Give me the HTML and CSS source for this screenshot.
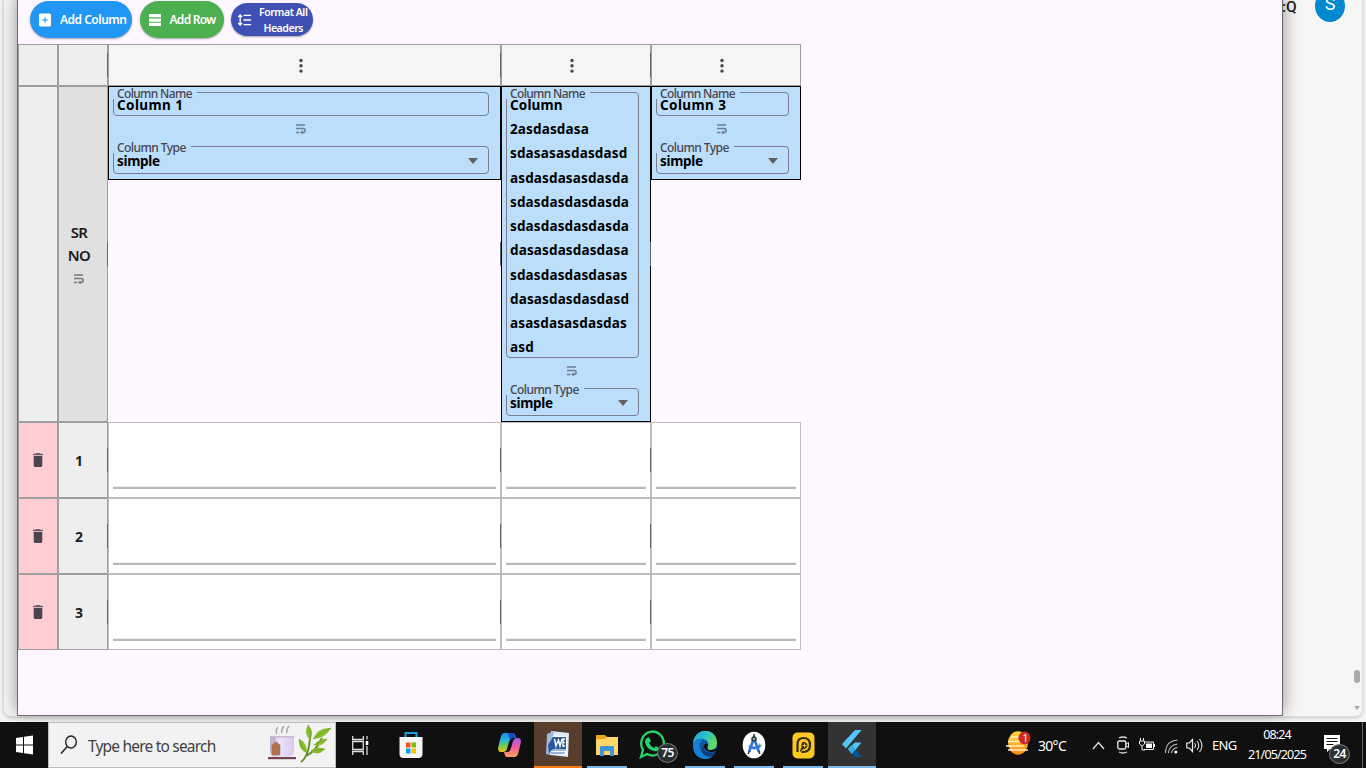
FILE: index.html
```html
<!DOCTYPE html>
<html lang="en">
<head>
<meta charset="utf-8">
<title>Table editor</title>
<link rel="stylesheet" href="styles.css">
</head>
<body>
<svg width="0" height="0" class="defs">
  <symbol id="wrap" viewBox="0 0 10 10"><path d="M0 1h9M0 4.600h7.200a1.900 1.900 0 0 1 0 3.800H5.200M0 8.400h3.400" fill="none" stroke="currentColor" stroke-width="1.500"/><path d="M6.600 6.200v4.200L4.200 8.400z" fill="currentColor"/></symbol>
  <symbol id="dots" viewBox="0 0 4 16"><circle cx="2" cy="2.500" r="1.700"/><circle cx="2" cy="7.800" r="1.700"/><circle cx="2" cy="13.100" r="1.700"/></symbol>
  <symbol id="trash" viewBox="0 0 10 14"><path d="M3 0h4l.6.7H10v1.500H0V.7h2.400z" opacity=".8"/><path d="M.7 3h8.600v9q0 2-1.500 2H2.200Q.7 14 .7 12z"/></symbol>
</svg>
<div class="desktop">
  <div class="backdrop">
    <div class="code">:Q</div>
    <div class="avatar">S</div>
    <div class="thumb"></div>
    <div class="arrow"></div>
  </div>
  <main class="window">
    <div class="toolbar">
      <button class="btn blue"><svg width="12" height="14" viewBox="0 0 12 14"><rect y=".5" width="12" height="13" rx="1.500" fill="#fff"/><path d="M3 7h6M6 4v6" stroke="#2196f3" stroke-width="1"/></svg><span>Add Column</span></button>
      <button class="btn green"><svg width="12" height="12" viewBox="0 0 12 12"><path d="M0 0h12v3.300H0zM0 4.400h12v3.300H0zM0 8.800h12V12H0z" fill="#fff"/></svg><span>Add Row</span></button>
      <button class="btn indigo"><svg width="13" height="12" viewBox="0 0 13 12"><path d="M5.500 1.300H13M5.500 6H13M5.500 10.700H13M2.200 1v10M.3 3l1.900-2L4.100 3M.3 9l1.900 2L4.100 9" fill="none" stroke="#fff" stroke-width="1.300"/></svg><span>Format All<br>Headers</span></button>
    </div>
    <div class="table">
      <div class="cell g1"></div>
      <div class="cell g1 handle"></div>
      <div class="cell top handle"><svg width="4" height="16"><use href="#dots"/></svg></div>
      <div class="cell top handle"><svg width="4" height="16"><use href="#dots"/></svg></div>
      <div class="cell top"><svg width="4" height="16"><use href="#dots"/></svg></div>

      <div class="cell g1"></div>
      <div class="cell g2 handle"><div class="sr">SR<br>NO</div><svg width="10" height="10"><use href="#wrap"/></svg></div>
      <div class="head handle"><div class="card">
        <div class="field name short"><label>Column Name</label><p>Column 1</p></div>
        <svg class="w" width="10" height="10"><use href="#wrap"/></svg>
        <div class="field type"><label>Column Type</label><p>simple</p><i></i></div>
      </div></div>
      <div class="head handle"><div class="card">
        <div class="field name"><label>Column Name</label><p>Column<br>2asdasdasa<br>sdasasasdasdasd<br>asdasdasasdasda<br>sdasdasdasdasda<br>sdasdasdasdasda<br>dasasdasdasdasa<br>sdasdasdasdasas<br>dasasdasdasdasd<br>asasdasasdasdas<br>asd</p></div>
        <svg class="w" width="10" height="10"><use href="#wrap"/></svg>
        <div class="field type"><label>Column Type</label><p>simple</p><i></i></div>
      </div></div>
      <div class="head"><div class="card">
        <div class="field name short"><label>Column Name</label><p>Column 3</p></div>
        <svg class="w" width="10" height="10"><use href="#wrap"/></svg>
        <div class="field type"><label>Column Type</label><p>simple</p><i></i></div>
      </div></div>

      <div class="cell del"><svg width="10" height="14"><use href="#trash"/></svg></div><div class="cell g1 num handle">1</div><div class="data handle"></div><div class="data handle"></div><div class="data"></div>
      <div class="cell del"><svg width="10" height="14"><use href="#trash"/></svg></div><div class="cell g1 num handle">2</div><div class="data handle"></div><div class="data handle"></div><div class="data"></div>
      <div class="cell del"><svg width="10" height="14"><use href="#trash"/></svg></div><div class="cell g1 num handle">3</div><div class="data handle"></div><div class="data handle"></div><div class="data"></div>
    </div>
  </main>
</div>
<footer class="taskbar">
  <div class="slot start"><svg width="17" height="20" viewBox="0 0 17 20"><path d="M0 3l7-1v7.500H0zM8 1.800L17 .5v9H8zM0 10.500h7V18l-7-1zM8 10.500h9v9l-9-1.300z" fill="#fff"/></svg></div>
  <div class="search">
    <svg width="18" height="20" viewBox="0 0 18 20"><ellipse cx="11" cy="7" rx="5.300" ry="6" fill="none" stroke="#222" stroke-width="1.400"/><path d="M7.300 11.500L1 18.600" stroke="#222" stroke-width="1.500"/></svg>
    <span>Type here to search</span>
    <svg class="tea" width="66" height="42" viewBox="0 0 66 42">
      <defs><linearGradient id="cup"><stop stop-color="#b9a9cb"/><stop offset=".4" stop-color="#ece5f8"/><stop offset="1" stop-color="#d5c9ee"/></linearGradient></defs>
      <path d="M9 10q-2-3 1-7M14 9q-1-3 2-7M19 9q-1-3 2-7" fill="none" stroke="#aaa" stroke-width="1.500"/>
      <path d="M2 12h24v13q0 8-6 8H8q-6 0-6-8z" fill="url(#cup)"/>
      <path d="M2 12h24v1.500H2z" fill="#c9b9d2"/>
      <path d="M6 13v6M4 21l4-3 4 3v10H4z" fill="#b5714f" stroke="#9c6049" stroke-width=".5"/>
      <path d="M0 33h28v2.200H0z" fill="#76434f"/>
      <path d="M33 38q8-6 9-25M38 32q10-5 16-18" fill="none" stroke="#5c8f22" stroke-width="1.800"/>
      <path d="M40 1q7 6 2 15-7-7-2-15zM31 15q8 3 8 14-9-3-8-14zM63 4q-13-1-18 11 12 0 18-11zM59 15q-8-1-13 6 8 3 13-6zM57 25q-8-4-14 2 7 6 14-2z" fill="#8dbf2c"/>
      <path d="M40 1q4 7 2 15M31 15q2 8 8 14M63 4q-10 4-18 11M59 15l-13 6M57 25l-14 2" fill="none" stroke="#6ca127" stroke-width="1"/>
    </svg>
  </div>
  <div class="slot"><svg width="17" height="19" viewBox="0 0 17 19"><path d="M.7 0v3.500h10.600V0M.7 19v-3.500h10.600V19M.7 5.500h10.600v8H.7zM15 0v3.500M15 10v9" fill="none" stroke="#ddd" stroke-width="1.300"/><path d="M13.700 5h2.600v4h-2.600z" fill="#fff"/></svg></div>
  <div class="slot store"><svg width="24" height="28" viewBox="0 0 24 28"><path d="M6.500 7V2h11v5" fill="none" stroke="#13a2dc" stroke-width="2"/><path d="M.5 6h23v17q0 4-4 4h-15q-4 0-4-4z" fill="#f5f5f5"/><path d="M7 11.500h4.500v5H7z" fill="#f25022"/><path d="M12.500 11.500H17v5h-4.500z" fill="#7fba00"/><path d="M7 17.500h4.500v5H7z" fill="#00a4ef"/><path d="M12.500 17.500H17v5h-4.500z" fill="#ffb900"/></svg></div>
  <div class="slot copilot"><svg width="23" height="26" viewBox="0 0 23 26">
    <defs><linearGradient id="ca" x2="0" y2="1"><stop stop-color="#198be8"/><stop offset=".4" stop-color="#28b8d8"/><stop offset=".7" stop-color="#7bc944"/><stop offset="1" stop-color="#f5c329"/></linearGradient><linearGradient id="cb" x2="0" y2="1"><stop stop-color="#a259ee"/><stop offset=".5" stop-color="#ef5b9c"/><stop offset="1" stop-color="#ffa35c"/></linearGradient></defs>
    <path d="M6 1h9q2 0 3 5h-3q-3 0-4 4l-2 7q-1 3-4 3H3q-4 0-2.500-6L3 4q1-3 3-3z" fill="url(#ca)"/><path d="M17 25H9q-2 0-3-5h3q3 0 4-4l2-7q1-3 4-3h1q4 0 2.500 6L20 22q-1 3-3 3z" fill="url(#cb)"/><path d="M10 1h5q2 0 3 5h-3q-2 0-3 2z" fill="#1b4ac2"/></svg></div>
  <div class="slot word"><svg width="24" height="27" viewBox="0 0 24 27"><path d="M5 0l18 2-1 24L4 24z" fill="#dfe9f6"/><path d="M7 4l14 1.500V24L7 22z" fill="#fff"/><path d="M15 9h5M15 12h5M15 15h5M5 19h15M5 22h14" stroke="#7da0cf" stroke-width="1.300"/><path d="M1 3L8 0 4 24l-4-1z" fill="#9eb9de"/><path d="M7 6h13v12H12Q5 17 3 23L2 14z" fill="#2b579a"/><path d="M8.500 8l1.500 7 2.500-6 1.500 6 2-7M19 8h-2v7h2M17 11.500h2" fill="none" stroke="#fff" stroke-width="1.400"/></svg></div>
  <div class="slot run"><svg width="22" height="22" viewBox="0 0 22 22"><path d="M0 1h9l2 2h11v18H0z" fill="#e8a61c"/><path d="M0 5h9l2-2h11v18H0z" fill="#ffd768"/><path d="M4 22v-9q0-1 1-1h12q1 0 1 1v9h-4v-5H8v5z" fill="#3d94db"/></svg></div>
  <div class="slot wa"><svg width="26" height="29" viewBox="0 0 26 29"><path d="M2 27l2-7A11.300 12 0 1 1 8 24z" fill="none" stroke="#25d366" stroke-width="2.300"/><path d="M8 8q2-2 3 1l1 2-2 2q2 4 5 5l2-2 3 2q-1 4-5 3-8-2-9-9 0-3 2-4z" fill="#25d366"/></svg><b class="badge">75</b></div>
  <div class="slot run"><svg width="24" height="28" viewBox="0 0 24 28"><defs><linearGradient id="ea" x2="1" y2=".5"><stop stop-color="#249fde"/><stop offset=".55" stop-color="#2fc2c5"/><stop offset="1" stop-color="#65d858"/></linearGradient></defs><ellipse cx="12" cy="14" rx="12" ry="14" fill="#0c59a4"/><path d="M0 13C1-5 24-4 24 12q0 7-8 7-3-1-1-4 1-6-5-7-7-1-10 5z" fill="url(#ea)"/><path d="M0 13q4-6 10-5-5 4-3 10 4 9 14 5-3 5-9 5Q0 27 0 13z" fill="#1581d4"/><path d="M10 14q-1 7 8 8 4 0 5-2-3 8-10 5-7-4-3-11z" fill="#123e75"/><path d="M11 14q3-3 4 0-2 5 2 5 5 0 7-2v2q-7 5-12-1-2-2-1-4z" fill="#111"/></svg></div>
  <div class="slot run"><svg width="24" height="28" viewBox="0 0 24 28"><ellipse cx="12" cy="14" rx="11.300" ry="13.300" fill="#fff"/><path d="M7 21l5-14 5 14M7 15q5 4 11 0" fill="none" stroke="#3878e5" stroke-width="2.800"/><circle cx="12" cy="8" r="2" fill="#8ab" stroke="#333" stroke-width="1.500"/><path d="M12 3v3M7.500 20L6 23M16.500 20l1.500 3" stroke="#333" stroke-width="1.400"/><path d="M17 12l3 3-3 1z" fill="#43b55b"/></svg></div>
  <div class="slot run"><svg width="23" height="27" viewBox="0 0 23 27"><rect x=".5" y=".5" width="22" height="26" rx="5" fill="#fdc921"/><path d="M5.500 20V12q0-6 6-6 6.500 0 6.500 7t-7 7H9.500" fill="none" stroke="#332b18" stroke-width="2.200"/><path d="M8 20q0-3 1.500-4v-4q1-3 3-2 3 1 3 4-1 3-4 3z" fill="#332b18"/><path d="M10.500 13.500h4M12.500 11.500v4" stroke="#fdc921"/></svg></div>
  <div class="slot active"><svg width="20" height="28" viewBox="0 0 20 28"><path d="M13 0h6.500L4 18.500 0 14z" fill="#54c5f8"/><path d="M13 12.500h6.500L10 24 6 19z" fill="#54c5f8"/><path d="M6 19l4-4.300 4 4.800-4 4.500z" fill="#35afe8"/><path d="M10 23.500l3.500-4L19.500 27H13z" fill="#01579b"/></svg></div>
  <div class="tray">
    <svg class="weather" width="25" height="24" viewBox="0 0 25 24"><defs><linearGradient id="sun" x2="0" y2="1"><stop stop-color="#ffd93c"/><stop offset="1" stop-color="#ff8b16"/></linearGradient></defs><ellipse cx="12" cy="12" rx="10" ry="11.700" fill="url(#sun)"/><path d="M5 6h10M2 10.500h15M0 15h18M2 19h20" stroke="#fff0ca" stroke-width="1.500"/><ellipse cx="18.500" cy="7" rx="6" ry="6.500" fill="#cb2a22"/><text x="16.400" y="11" font-size="10" fill="#fff" font-family="Noto Sans">1</text></svg>
    <span class="temp">30°C</span>
    <svg class="chev" width="13" height="9" viewBox="0 0 13 9"><path d="M1 8l5.500-6.500L12 8" fill="none" stroke="#ddd" stroke-width="1.400"/></svg>
    <svg class="cam" width="12" height="18" viewBox="0 0 12 18"><path d="M2 2q4-2 8 0M2 16q4 2 8 0" fill="none" stroke="#ddd" stroke-width="1.300"/><rect x=".8" y="5" width="8" height="8" rx="1.500" fill="none" stroke="#eee" stroke-width="1.300"/><path d="M9 8l2.500-1.500v5L9 10" fill="none" stroke="#eee"/></svg>
    <svg class="bat" width="16" height="14" viewBox="0 0 16 14"><path d="M1.500 0v3M4.500 0v3M.5 3h5v3L3 8 .5 6zM3 8v4h3" fill="none" stroke="#eee"/><path d="M6 4h8.500v7.500H5" fill="none" stroke="#eee"/><path d="M7 5.500h6v4.500H7z" fill="#fff"/><path d="M15.500 6v3" stroke="#fff"/></svg>
    <svg class="wifi" width="13" height="15" viewBox="0 0 13 15"><path d="M.5 14Q.5 2 12.500 1M3.500 14Q4 6 12.500 5M6.500 14q1-5 6-5.500" fill="none" stroke="#bbb" stroke-width="1.200"/><circle cx="10.800" cy="13" r="1.500" fill="#fff"/></svg>
    <svg class="vol" width="18" height="15" viewBox="0 0 18 15"><path d="M.8 5h2.500L6.500 1.500v12L3.300 10H.8z" fill="none" stroke="#eee" stroke-width="1.200"/><path d="M8.500 5q2 2.500 0 5M11 3q3.500 4.500 0 9M13.500 1q5 6.500 0 13" fill="none" stroke="#ddd" stroke-width="1.100"/></svg>
    <span class="lang">ENG</span>
    <div class="clock"><span>08:24</span><span class="date">21/05/2025</span></div>
    <div class="note"><svg width="16" height="17" viewBox="0 0 16 17"><path d="M0 0h16v14H6l-3 3v-3H0z" fill="#fff"/><path d="M2.500 3.500h11M2.500 6.500h11M2.500 9.500h7" stroke="#111" stroke-width="1.200"/></svg><b class="badge">24</b></div>
    <div class="peek"></div>
  </div>
</footer>
</body>
</html>
```

FILE: styles.css
```css
* { box-sizing: border-box; }
body { margin: 0; width: 1366px; height: 768px; overflow: hidden; font-family: "Noto Sans", sans-serif; color: #1d1b20; }
.defs { position: absolute; }
svg { display: block; flex: none; }
.desktop { position: relative; height: 722px; background: #f4f4f4; overflow: hidden; padding-left: 17px; }
.backdrop { position: absolute; left: 3px; top: -10px; width: 1360px; height: 727px; background: #f7f6f4; border: 1px solid #dedddb; border-radius: 0 0 8px 8px; box-shadow: 0 1px 3px #ccc; }
.code { position: absolute; left: 1278px; top: 7px; font: 500 15.5px/18px Roboto, sans-serif; color: #222; }
.avatar { position: absolute; left: 1311px; top: -1px; width: 30px; height: 32px; border-radius: 50%; background: #0288d1; color: #fff; font: 18px/28px Roboto, sans-serif; text-align: center; }
.thumb { position: absolute; left: 1350px; top: 679px; width: 6px; height: 13px; border-radius: 3px; background: #aaa; }
.arrow { position: absolute; left: 1350px; top: 715px; border: 3px solid transparent; border-top: 4px solid #aaa; border-bottom: 0; }
.window { position: relative; width: 1266px; height: 716px; background: #fef7ff; border: solid #6c696e; border-width: 0 1px 1px; box-shadow: 0 -4px 16px rgba(0,0,0,.42); }
.toolbar { height: 44px; padding: 1px 0 0 12px; display: flex; align-items: flex-start; gap: 7.5px; }
.btn { border: 0; padding: 0; height: 37px; border-radius: 19px; color: #fff; font: 600 12px/16px "Noto Sans", sans-serif; display: flex; align-items: center; box-shadow: 0 1px 2px rgba(0,0,0,.35); white-space: nowrap; }
.btn.blue { width: 102px; background: #2196f3; padding-left: 9px; gap: 9px; letter-spacing: -.5px; }
.btn.green { width: 84px; background: #4caf50; padding-left: 9px; gap: 9px; letter-spacing: -.72px; }
.btn.indigo { width: 82px; height: 33px; margin-top: 2px; background: #3f51b5; padding-left: 7px; gap: 8px; font-size: 10.5px; letter-spacing: -.45px; }
.table { display: grid; width: 783px; grid-template-columns: 40px 50px 393px 150px 150px; grid-template-rows: 42px 336px 76px 76px 76px; }
.cell { border: 1px solid #9e9e9e; display: flex; flex-direction: column; align-items: center; justify-content: center; }
.g1 { background: #eee; }
.g2 { background: #e0e0e0; padding: 0 8px 4px 0; }
.g2 svg { color: #777; margin-top: 7px; }
.top { background: #f5f5f5; fill: #49454f; padding: 1px 8px 0 0; }
.del { background: #ffcdd2; fill: #49454f; }
.num { font-weight: 700; font-size: 14px; padding-right: 8px; }
.sr { font: 600 15px/23px "Noto Sans", sans-serif; text-align: center; letter-spacing: -.6px; }
.handle { position: relative; }
.handle::after { content: ""; position: absolute; right: -1px; top: calc(50% - 12px); width: 1px; height: 24px; background: #666; }
.head.handle::after { right: 0; }
.card { background: #bbdefb; border: 1px solid #000; padding: 5px 11.5px 5px 4px; }
.field { position: relative; border: 1px solid #7a7d90; border-radius: 4px; padding-left: 3px; color: #000; }
.field label { position: absolute; left: -1px; top: -4px; padding: 0 5px 0 4px; height: 10px; font: 500 12px/10px "Noto Sans", sans-serif; color: #49454f; background: #bbdefb; white-space: nowrap; letter-spacing: -.66px; }
.field p { position: relative; margin: 0; font-size: 13.5px; font-weight: 700; line-height: 24.22px; white-space: nowrap; letter-spacing: .14px; }
.name { min-height: 24px; }
.name p { margin-bottom: -2px; }
.short p { letter-spacing: .4px; }
.type { height: 28px; }
.type label { letter-spacing: -.56px; }
.type p { line-height: 29px; letter-spacing: -.3px; }
.type i { position: absolute; right: 10px; top: 11px; border: 5px solid transparent; border-top: 6px solid #616161; border-bottom: 0; }
.w { margin: 8px auto 12px; color: #6d7e91; }
.data { background: #fff; border: 1px solid #bdbdbd; padding: 0 4px 8.5px; display: flex; align-items: flex-end; }
.data::before { content: ""; flex: 1; height: 2px; background: #b9b8bc; box-shadow: 0 -1px 0 rgba(185,184,188,.25); }

.taskbar { height: 46px; background: #101010; display: flex; color: #fff; }
.slot { width: 48px; margin-right: 1px; display: flex; align-items: center; justify-content: center; position: relative; flex: none; }
.start { margin: 0; }
.search { width: 288px; background: #f2f2f2; border: 1px solid #bbb; display: flex; align-items: center; padding-left: 11px; font-size: 15.5px; color: #3f4143; flex: none; }
.search span { margin: 1px 0 0 10px; width: 180px; letter-spacing: -.8px; white-space: nowrap; }
.store { margin: 0 51px 0 2px; }
.copilot { margin-right: 0; }
.copilot svg { margin-right: 2px; }
.word { background: #573e2c; border-bottom: 2px solid #ff7b0d; }
.run::after { content: ""; position: absolute; left: 4px; right: 4px; bottom: 0; height: 2px; background: #76b9ed; }
.active { background: #333; border-bottom: 2px solid #76b9ed; margin-right: 0; }
.badge { position: absolute; width: 21px; height: 20px; border-radius: 50%; background: #2c2f31; border: 1px solid #777; font: 600 12px/18px "Noto Sans", sans-serif; text-align: center; letter-spacing: -.6px; }
.wa .badge { left: 25px; top: 21px; }
.wa svg { margin: 0 8px 2px 0; }
.tray { flex: 1; padding-left: 130px; display: flex; align-items: center; font-size: 13px; letter-spacing: -.7px; white-space: nowrap; }
.weather { margin-top: -4px; }
.temp { margin-left: 7px; width: 54px; font-size: 14px; }
.chev { margin-right: 12px; }
.cam { margin-right: 10px; }
.bat { margin-right: 10px; }
.wifi { margin: 2px 8px 0 0; }
.vol { margin-right: 8px; }
.lang { width: 35px; }
.clock { width: 60px; display: flex; flex-direction: column; align-items: center; line-height: 20px; font-size: 12.5px; margin-top: -1px; letter-spacing: -.85px; }
.note { position: relative; margin: -4px 0 0 17px; }
.note .badge { left: 5px; top: 9px; }
.peek { margin-left: auto; margin-right: 3px; width: 1px; height: 46px; background: #666; }
```
